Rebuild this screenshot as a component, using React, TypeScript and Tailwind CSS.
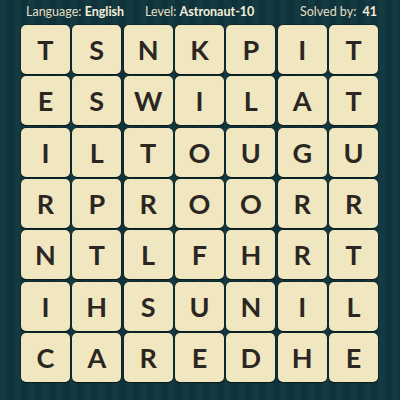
import React from "react";

const rows = [
  "TSNKPIT",
  "ESWILAT",
  "ILTOUGU",
  "RPROORR",
  "NTLFHRT",
  "IHSUNIL",
  "CAREDHE",
];

export default function App() {
  return (
    <div
      className="w-[400px] h-[400px] overflow-hidden bg-[repeating-linear-gradient(90deg,#143a41_0px,#143a41_7px,#10323a_7px,#10323a_14px)] flex flex-col"
      style={{ fontFamily: "Lato, 'Noto Sans', sans-serif" }}
    >
      <div className="h-[24px] flex items-center pl-[26px] text-[12.5px] leading-none text-[#e6dfc4]">
        <div className="w-[119px] whitespace-nowrap">
          Language: <span className="font-bold text-[#f4efdc]">English</span>
        </div>
        <div className="w-[155px] whitespace-nowrap">
          Level: <span className="font-bold text-[#f4efdc]">Astronaut-10</span>
        </div>
        <div className="whitespace-nowrap">
          Solved by: <span className="font-bold text-[#f4efdc] ml-[3px]">41</span>
        </div>
      </div>
      <div className="ml-[21px] mt-[1px] w-[357px] h-[357px] grid grid-cols-7 grid-rows-7 gap-[2.5px]">
        {rows.flatMap((r, i) =>
          r.split("").map((ch, j) => (
            <div
              key={`${i}-${j}`}
              className="rounded-[5px] bg-[#f0e7c0] shadow-[0_0_0_0.5px_#0b1d20,0_1px_1px_rgba(0,0,0,0.5)] flex items-center justify-center text-[27px] font-bold text-[#2b2622] leading-none"
            >
              {ch}
            </div>
          ))
        )}
      </div>
    </div>
  );
}
